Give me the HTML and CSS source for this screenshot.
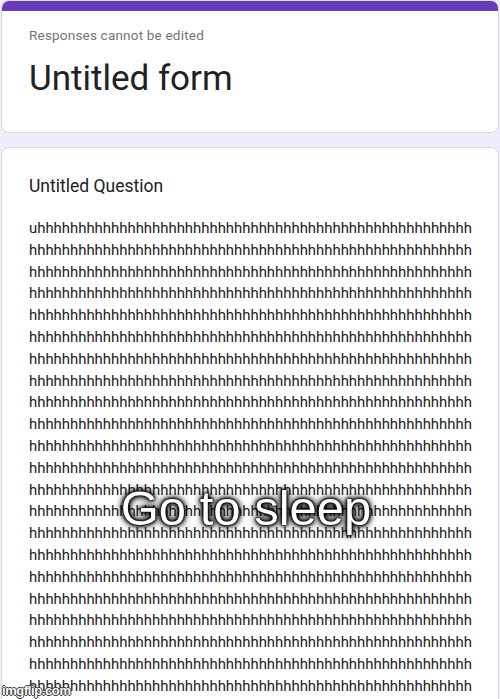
FILE: index.html
```html
<!DOCTYPE html>
<html lang="en">
<head>
    <meta charset="UTF-8">
    <meta name="viewport" content="width=device-width, initial-scale=1.0">
    <title>Untitled form</title>
    <link rel="stylesheet" href="styles.css">
</head>
<body>
    <div class="page">
        <div class="card header-card">
            <div class="accent"></div>
            <div class="header-body">
                <div class="notice">Responses cannot be edited</div>
                <h1>Untitled form</h1>
            </div>
        </div>
        <div class="card question-card">
            <div class="question-title">Untitled Question</div>
            <div class="answer">uhhhhhhhhhhhhhhhhhhhhhhhhhhhhhhhhhhhhhhhhhhhhhhhhhhhhhhhhhhhhhhhhhhhhhhhhhhhhhhhhhhhhhhhhhhhhhhhhhhhhhhhhhhhhhhhhhhhhhhhhhhhhhhhhhhhhhhhhhhhhhhhhhhhhhhhhhhhhhhhhhhhhhhhhhhhhhhhhhhhhhhhhhhhhhhhhhhhhhhhhhhhhhhhhhhhhhhhhhhhhhhhhhhhhhhhhhhhhhhhhhhhhhhhhhhhhhhhhhhhhhhhhhhhhhhhhhhhhhhhhhhhhhhhhhhhhhhhhhhhhhhhhhhhhhhhhhhhhhhhhhhhhhhhhhhhhhhhhhhhhhhhhhhhhhhhhhhhhhhhhhhhhhhhhhhhhhhhhhhhhhhhhhhhhhhhhhhhhhhhhhhhhhhhhhhhhhhhhhhhhhhhhhhhhhhhhhhhhhhhhhhhhhhhhhhhhhhhhhhhhhhhhhhhhhhhhhhhhhhhhhhhhhhhhhhhhhhhhhhhhhhhhhhhhhhhhhhhhhhhhhhhhhhhhhhhhhhhhhhhhhhhhhhhhhhhhhhhhhhhhhhhhhhhhhhhhhhhhhhhhhhhhhhhhhhhhhhhhhhhhhhhhhhhhhhhhhhhhhhhhhhhhhhhhhhhhhhhhhhhhhhhhhhhhhhhhhhhhhhhhhhhhhhhhhhhhhhhhhhhhhhhhhhhhhhhhhhhhhhhhhhhhhhhhhhhhhhhhhhhhhhhhhhhhhhhhhhhhhhhhhhhhhhhhhhhhhhhhhhhhhhhhhhhhhhhhhhhhhhhhhhhhhhhhhhhhhhhhhhhhhhhhhhhhhhhhhhhhhhhhhhhhhhhhhhhhhhhhhhhhhhhhhhhhhhhhhhhhhhhhhhhhhhhhhhhhhhhhhhhhhhhhhhhhhhhhhhhhhhhhhhhhhhhhhhhhhhhhhhhhhhhhhhhhhhhhhhhhhhhhhhhhhhhhhhhhhhhhhhhhhhhhhhhhhhhhhhhhhhhhhhhhhhhhhhhhhhhhhhhhhhhhhhhhhhhhhhhhhhhhhhhhhhhhhhhhhhhhhhhhhhhhhhhhhhhhhhhhhhhhhhhhhhhhhhhhhhhhhhhhhhhhhhhhhhhhhhhhhhhhhhhhhhhhhhhhhhhhhhhhhhhhhhhhhhhhhhhhhhhhhhhhhhhhhhhhhhhhhhhhhhhhhhhhhhhhhhhhhhhhhhhhhhhhhhhhhhhhhhhhhhhhhhhhhhhhhhhhhhhhhhhhhhhhhhhhhhhhhhhhhhhhhhhhhhhhhhhhhhhhhhhhhhhhhhhhhhhhhhhhhhhhhhhhhhhhhhhhhhhhhhhhhhhhhhhhhhhhhhhhhhhhhhhhhhhhhhhhhhhhhhhhhhhhhhhhhhhhhhhhhhhhhhhhhhhhhhhhhhhhhhhhhhhhhhhhhhhhhhhhhhhhhhhhhhhhhhhhhhhhhhhhhhhhhhhhhhhhhhhhhhhhhhhhhhhhhhhhhhhhhhhhhhhhhhhhhhhhhhhhhhhhhhhhhhhhhhhhhhhhhhhhhhhhhhhhhhhhhhhhhhhhhhhhhhhhhhhhhhhhhhhhhhhhhhhhhhhhhhhhhhhhhhhhhhhhhhhhhhhhhhhhhhhhhhhhhhhhhhhhhhhhhhhhhhhhhhhhhhhhhhhhhhhhhhhhhhhhhhhhhhhhhhhhhhhhhhhhhhhhhhhhhhhhhhhhhhhhhhhhhhhhhhhhhhhhhhhhhhhhhhhhhhhhhhhhhhhhhhhhhhhhhhhhhhhhhhhhhhhhhhhhhhhhhhhhhhhhhhhhhhhhhhhhhhhhhhhhhhhhhhhhhhhhhhhhhhhhhhhhhhhhhhhhhhhhhhhhhhhhhhhhhhhhhhhhhhhhhhhhhhhhhhhhhhhhhhhhhhhhhhhhhhhhhhhhhhhhhhhhhhhhhhhhhhhhhhhhhhhhhhhhhhhhhhhhhhhhhhhhhhhhhhhhhhhhhhhhhhhhhhhhhhhhhhhhhhhhhhhhhhhhhhhhhhhhhhhhhhhhhhhhhhhhhhhhhhhhhhhhhhhhhhhhhhhhhhhhhhhhhhhhhhhhhhhhhhhhhhhhhhhhhhhhhhhhhhhhhhhhhhhhhhhhhhhhhhhhhhhhhhhhhhhhhhhhhhhhhhhhhhhhhhhhhhhhhhhhhhhhhhhhhhhhhhhhhhhhhhhhhhhhhhhhhhhhhhhhhhhhhhhhhhhhhhhhhhhhhhhhhhhhhhhhhhhhhhhhhhhhhhhhhhhhhhhhhhhhhhhhhhhhhhhhhhhhhhhhhhhhhhhhhhhhhhhhhhhhhhhhhhhhhhhhhhhhhhhhhhhhhhhhhhhhhhhhhhhhhhhhhhhhhhhhhhhhhhhhhhhhhhhhhhhhhhhhhhhhhhhhhhhhhhhhhhhhhhhhhhhhhhhhhhhhhhhhhhhhhhhhhhhhhhhhhhhhhhhhhhhhhhhhhhhhhhhhhhhh</div>
        </div>
    </div>
    <div class="caption">Go to sleep</div>
    <div class="watermark">imgflip.com</div>
</body>
</html>
```

FILE: styles.css
```css
body {
    margin: 0;
    background-color: #f0ebf8;
    font-family: Roboto, Arial, sans-serif;
    color: #202124;
    height: 699px;
    overflow: hidden;
}
.page {
    display: flex;
    flex-direction: column;
    gap: 14px;
    padding: 0 1px;
}
.card {
    background-color: white;
    border: 1px solid #dadce0;
    border-radius: 8px;
    overflow: hidden;
}
.header-card {
    height: 133px;
    box-sizing: border-box;
}
.accent {
    height: 10px;
    background-color: #673ab7;
}
.header-body {
    padding: 15px 27px 0;
}
.notice {
    font-size: 13.5px;
    line-height: 18px;
    color: #70757a;
    letter-spacing: 0.2px;
}
h1 {
    margin: 15px 0 0;
    font-size: 35px;
    font-weight: 400;
    line-height: 40px;
}
.question-card {
    padding: 26px 24px 0 27px;
    height: 700px;
}
.question-title {
    font-size: 17.5px;
    line-height: 24px;
}
.answer {
    margin-top: 20px;
    font-size: 14.9px;
    line-height: 21.8px;
    word-break: break-all;
    width: 446px;
}
.caption {
    position: absolute;
    left: 0;
    right: 0;
    top: 480px;
    text-align: center;
    font-family: "Liberation Sans", Arial, sans-serif;
    font-size: 49px;
    line-height: 56px;
    color: white;
    text-shadow: 0 0 2px black, 0 0 3px black, 0 0 4px black, 0 0 6px black, 0 0 9px black;
    padding-right: 8px;
}
.watermark {
    position: absolute;
    left: 2px;
    bottom: 1px;
    font-family: "Liberation Sans", Arial, sans-serif;
    font-weight: bold;
    font-size: 13px;
    letter-spacing: -0.4px;
    color: white;
    text-shadow: -1px 0 #333, 1px 0 #333, 0 -1px #333, 0 1px #333;
}
```
